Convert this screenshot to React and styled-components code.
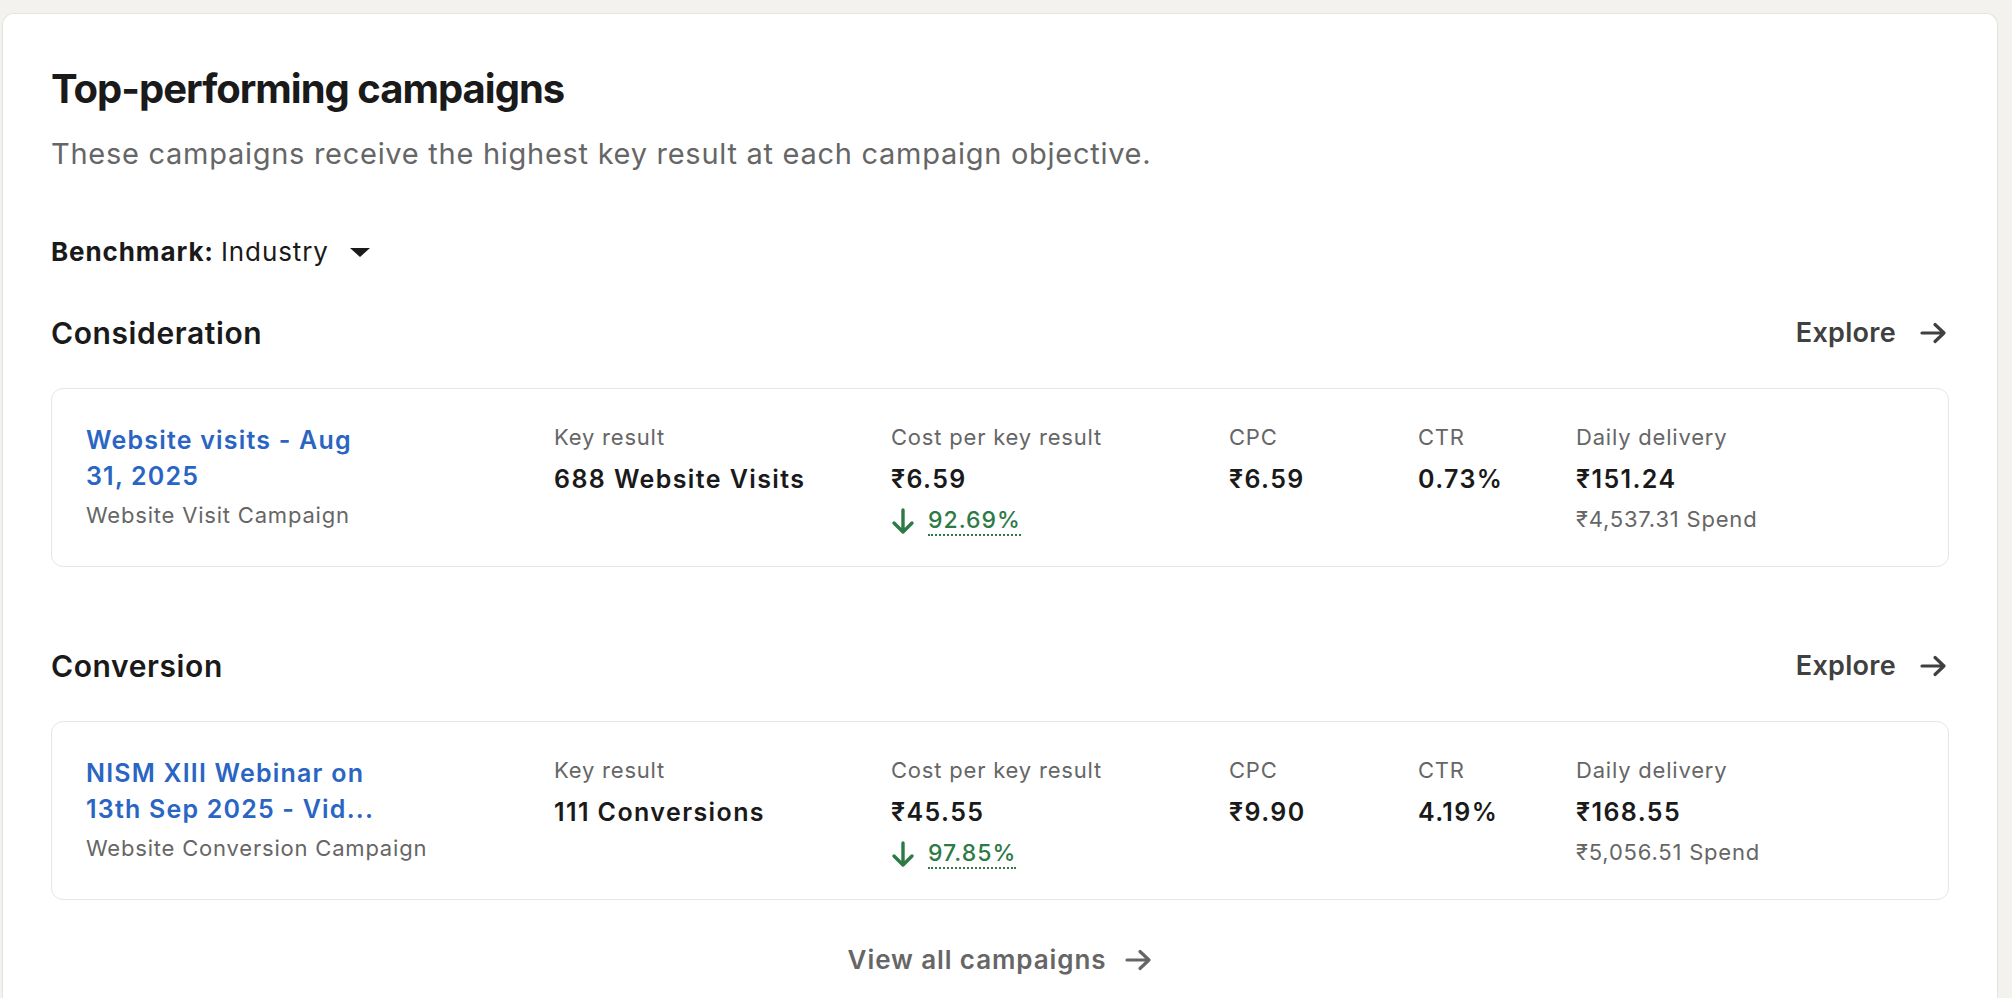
import React from 'react'
import styled, { createGlobalStyle } from 'styled-components'

const GlobalStyle = createGlobalStyle`
  body {
    margin: 0;
    background: #f3f2ef;
    font-family: Inter, "Noto Sans", sans-serif;
    color: #1a1a1a;
  }
`

const Page = styled.div`
  padding: 13px 14px 0 2px;
`

const Panel = styled.section`
  background: #fff;
  border: 1px solid #e4e3e0;
  border-bottom: none;
  border-radius: 12px 12px 0 0;
  padding: 51px 48px 40px;
`

const Title = styled.h2`
  margin: 0;
  font-size: 40px;
  line-height: 48px;
  font-weight: 700;
  letter-spacing: -1px;
  color: #1a1a1a;
`

const Subtitle = styled.p`
  margin: 21px 0 0;
  font-size: 29px;
  line-height: 40px;
  letter-spacing: 0.72px;
  color: #666;
`

const Benchmark = styled.div`
  margin-top: 62px;
  display: flex;
  align-items: center;
  font-size: 26px;
  line-height: 32px;
  letter-spacing: 0.9px;
  color: #1a1a1a;
  b { font-weight: 700; margin-right: 7px; }
`

const Caret = styled.span`
  margin-left: 21px;
  width: 0;
  height: 0;
  border-left: 10px solid transparent;
  border-right: 10px solid transparent;
  border-top: 9px solid #1a1a1a;
`

const Section = styled.div`
  margin-top: ${props => props.first ? '47px' : '81px'};
`

const SectionHead = styled.div`
  display: flex;
  align-items: center;
  justify-content: space-between;
  margin-bottom: 37px;
`

const SectionTitle = styled.h3`
  margin: 0;
  font-size: 30px;
  line-height: 36px;
  font-weight: 600;
  letter-spacing: 0.6px;
  color: #1a1a1a;
`

const Explore = styled.a`
  display: flex;
  align-items: center;
  gap: 24px;
  font-size: 27px;
  line-height: 36px;
  font-weight: 600;
  letter-spacing: 0.3px;
  color: #404040;
  text-decoration: none;
  margin-right: 2px;
`

const Card = styled.div`
  display: grid;
  grid-template-columns: 468px 337px 338px 189px 158px 1fr;
  border: 1px solid #e6e6e6;
  border-radius: 12px;
  padding: 33px 34px 30px;
`

const NameCol = styled.div`
  display: flex;
  flex-direction: column;
`

const CampaignName = styled.a`
  max-width: 300px;
  font-size: 25px;
  line-height: 36px;
  font-weight: 600;
  letter-spacing: 1.2px;
  color: #2a65c3;
  text-decoration: none;
`

const SubText = styled.div`
  margin-top: ${props => props.gap || 0}px;
  font-size: 22px;
  line-height: 30px;
  letter-spacing: 0.8px;
  color: #666;
`

const Metric = styled.div`
  display: flex;
  flex-direction: column;
`

const Label = styled.div`
  font-size: 22px;
  line-height: 30px;
  letter-spacing: 0.8px;
  color: #666;
`

const Value = styled.div`
  margin-top: 9px;
  font-size: 25px;
  line-height: 36px;
  font-weight: 600;
  letter-spacing: 1.4px;
  color: #1a1a1a;
`

const Delta = styled.div`
  margin-top: 10px;
  display: flex;
  align-items: center;
  gap: 13px;
  font-size: 23px;
  line-height: 30px;
  font-weight: 500;
  letter-spacing: 1px;
  color: #2d7a46;
  span {
    border-bottom: 2px dotted #2d7a46;
    line-height: 27px;
  }
`

const Footer = styled.div`
  margin-top: 44px;
  display: flex;
  justify-content: center;
`

const ViewAll = styled.a`
  display: flex;
  align-items: center;
  gap: 19px;
  font-size: 26px;
  line-height: 32px;
  font-weight: 600;
  letter-spacing: 0.9px;
  color: #666;
  text-decoration: none;
`

function ArrowRight({ color }) {
  return (
    <svg width="27" height="22" viewBox="0 0 27 22" fill="none">
      <path d="M2 11h22M15 2.5l9 8.5-9 8.5" stroke={color} strokeWidth="3.2" strokeLinecap="round" strokeLinejoin="round" />
    </svg>
  )
}

function ArrowDown() {
  return (
    <svg width="24" height="27" viewBox="0 0 24 27" fill="none">
      <path d="M12 2v22M3 15l9 9 9-9" stroke="#2d7a46" strokeWidth="3.4" strokeLinecap="round" strokeLinejoin="round" />
    </svg>
  )
}

const sections = [
  {
    title: 'Consideration',
    name: 'Website visits - Aug 31, 2025',
    type: 'Website Visit Campaign',
    keyResult: '688 Website Visits',
    cost: '₹6.59',
    delta: '92.69%',
    cpc: '₹6.59',
    ctr: '0.73%',
    daily: '₹151.24',
    spend: '₹4,537.31 Spend'
  },
  {
    title: 'Conversion',
    name: 'NISM XIII Webinar on 13th Sep 2025 - Vid...',
    type: 'Website Conversion Campaign',
    keyResult: '111 Conversions',
    cost: '₹45.55',
    delta: '97.85%',
    cpc: '₹9.90',
    ctr: '4.19%',
    daily: '₹168.55',
    spend: '₹5,056.51 Spend'
  }
]

export default function App() {
  return (
    <Page>
      <GlobalStyle />
      <Panel>
        <Title>Top-performing campaigns</Title>
        <Subtitle>These campaigns receive the highest key result at each campaign objective.</Subtitle>
        <Benchmark>
          <b>Benchmark:</b> Industry
          <Caret />
        </Benchmark>
        {sections.map((s, i) => (
          <Section key={s.title} first={i === 0}>
            <SectionHead>
              <SectionTitle>{s.title}</SectionTitle>
              <Explore href="#">
                Explore
                <ArrowRight color="#404040" />
              </Explore>
            </SectionHead>
            <Card>
              <NameCol>
                <CampaignName href="#">{s.name}</CampaignName>
                <SubText gap={6}>{s.type}</SubText>
              </NameCol>
              <Metric>
                <Label>Key result</Label>
                <Value>{s.keyResult}</Value>
              </Metric>
              <Metric>
                <Label>Cost per key result</Label>
                <Value>{s.cost}</Value>
                <Delta>
                  <ArrowDown />
                  <span>{s.delta}</span>
                </Delta>
              </Metric>
              <Metric>
                <Label>CPC</Label>
                <Value>{s.cpc}</Value>
              </Metric>
              <Metric>
                <Label>CTR</Label>
                <Value>{s.ctr}</Value>
              </Metric>
              <Metric>
                <Label>Daily delivery</Label>
                <Value>{s.daily}</Value>
                <SubText gap={7}>{s.spend}</SubText>
              </Metric>
            </Card>
          </Section>
        ))}
        <Footer>
          <ViewAll href="#">
            View all campaigns
            <ArrowRight color="#666" />
          </ViewAll>
        </Footer>
      </Panel>
    </Page>
  )
}
